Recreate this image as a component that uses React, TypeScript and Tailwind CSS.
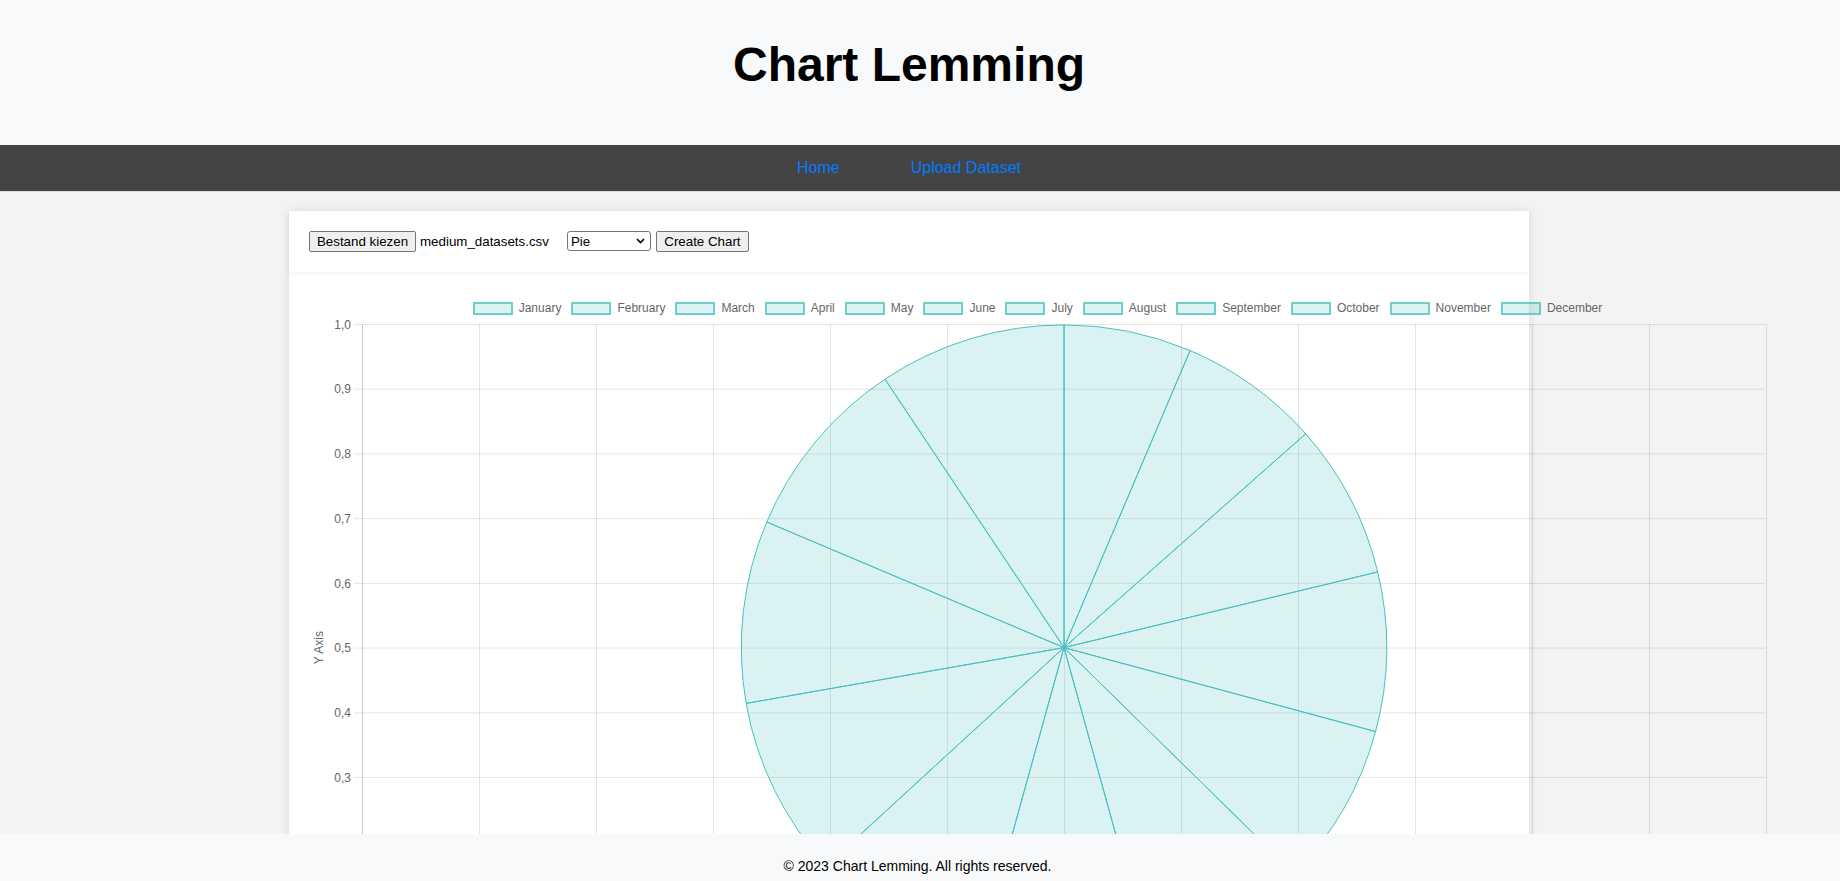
import React from 'react';

const months = [
    'January', 'February', 'March', 'April', 'May', 'June',
    'July', 'August', 'September', 'October', 'November', 'December',
];

// slice boundaries in degrees, clockwise from the east, starting at the top
const bounds = [-90, -67.0, -41.5, -13.56, 15.08, 44.45, 74.5, 105.5, 137.45, 170.04, 202.9, 236.3, 270];

const CHART_LEFT = 53;
const CHART_RIGHT = 1456.5;
const ROW = 64.72;
const CX = 755;
const CY = 323.6;
const R = 322.7;

const point = (deg: number) => {
    const a = (deg * Math.PI) / 180;
    return `${(CX + R * Math.cos(a)).toFixed(2)} ${(CY + R * Math.sin(a)).toFixed(2)}`;
};

const PieChart: React.FC = () => {
    const step = (CHART_RIGHT - CHART_LEFT) / 12;
    const rows = Array.from({ length: 11 }, (_, i) => i);
    // only the labels above the footer are visible
    const labels = Array.from({ length: 8 }, (_, i) => i);

    return (
        <div className="w-[1457px]">
            {/* Legend */}
            <div className="h-[32px] flex items-center justify-center">
                {months.map((m, i) => (
                    <div key={m} className={`flex items-center ${i > 0 ? 'ml-[10px]' : ''}`}>
                        <span className="w-[40px] h-[13px] border-2 border-[rgba(75,192,192,0.75)] bg-[rgba(75,192,192,0.2)]" />
                        <span className="ml-[6px] text-[12px] leading-[14px] text-[#666]">{m}</span>
                    </div>
                ))}
            </div>

            <svg width="1457" height="680" className="block overflow-visible" style={{ fontFamily: '"Liberation Sans", Arial, sans-serif' }}>
                {/* horizontal grid */}
                {rows.map((i) => (
                    <line key={`h${i}`} x1={45} x2={CHART_RIGHT} y1={i * ROW + 0.5} y2={i * ROW + 0.5} stroke="rgba(0,0,0,0.1)" />
                ))}

                {/* y tick labels */}
                {labels.map((i) => (
                    <text key={`t${i}`} x={42} y={i * ROW + 0.5} dy="0.35em" textAnchor="end" fontSize="12" fill="#666">
                        {(1 - i / 10).toFixed(1).replace('.', ',')}
                    </text>
                ))}

                {/* vertical grid */}
                {Array.from({ length: 13 }, (_, k) => (
                    <line
                        key={`v${k}`}
                        x1={Math.round(CHART_LEFT + k * step) + 0.5}
                        x2={Math.round(CHART_LEFT + k * step) + 0.5}
                        y1={0}
                        y2={10 * ROW + 8}
                        stroke={k === 0 ? 'rgba(0,0,0,0.2)' : 'rgba(0,0,0,0.1)'}
                    />
                ))}

                <text x={10} y={CY} transform={`rotate(-90 10 ${CY})`} textAnchor="middle" dy="0.35em" fontSize="12" fill="#666">
                    Y Axis
                </text>

                {/* pie slices */}
                {bounds.slice(0, -1).map((start, i) => (
                    <path
                        key={`s${i}`}
                        d={`M ${CX} ${CY} L ${point(start)} A ${R} ${R} 0 0 1 ${point(bounds[i + 1])} Z`}
                        fill="rgba(75,192,192,0.2)"
                        stroke="rgb(75,192,192)"
                        strokeWidth="1"
                        strokeLinejoin="round"
                    />
                ))}
            </svg>
        </div>
    );
};

const App: React.FC = () => {
    return (
        <div className="h-screen overflow-hidden flex flex-col bg-[#f3f3f3] font-['Liberation_Sans',Arial,sans-serif] text-black">
            {/* Header */}
            <header className="h-[145px] shrink-0 bg-[#f8f9fa]">
                <div className="w-[1818px] flex justify-center pt-[37px]">
                    <h1 className="text-[48px] leading-[1.15] font-bold">Chart Lemming</h1>
                </div>
            </header>

            {/* Navigation */}
            <nav className="h-[47px] shrink-0 bg-[#444] border-b border-[#dcdcdc]">
                <div className="w-[1818px] h-full flex items-center justify-center gap-[71px] text-[16px]">
                    <a href="#" className="text-[#007bff]">Home</a>
                    <a href="#" className="text-[#007bff]">Upload Dataset</a>
                </div>
            </nav>

            {/* Main content */}
            <main className="flex-1 min-h-0 w-[1818px] flex justify-center pt-[19px]">
                <div className="w-[1240px] h-full bg-white shadow-[0_0_10px_rgba(0,0,0,0.1)]">
                    {/* Upload form */}
                    <div className="relative z-10 h-[61px] px-[20px] flex items-center text-[13.33px] bg-white shadow-[0_2px_4px_rgba(0,0,0,0.05)]">
                        <button className="w-[107px] h-[21px] border border-[#767676] rounded-[2px] bg-[#efefef]">
                            Bestand kiezen
                        </button>
                        <span className="ml-[4px] mr-[18px]">medium_datasets.csv</span>
                        <div className="relative">
                            <select className="appearance-none w-[84px] h-[20px] pl-[3px] border border-[#767676] rounded-[3px] bg-white">
                                <option>Pie</option>
                                <option>Bar</option>
                                <option>Line</option>
                            </select>
                            <svg className="absolute right-[6px] top-[7px] pointer-events-none" width="9" height="6" viewBox="0 0 9 6">
                                <path d="M1 1 L4.5 4.5 L8 1" fill="none" stroke="#000" strokeWidth="1.6" />
                            </svg>
                        </div>
                        <button className="ml-[5px] w-[93px] h-[21px] border border-[#767676] rounded-[2px] bg-[#efefef]">
                            Create Chart
                        </button>
                    </div>

                    {/* Chart */}
                    <div className="p-[20px]">
                        <PieChart />
                    </div>
                </div>
            </main>

            {/* Footer */}
            <footer className="fixed bottom-0 left-0 right-0 h-[47px] bg-[#f8f9fa] flex justify-center pt-[24px] pr-[5px] text-[14px] leading-[16px]">
                © 2023 Chart Lemming. All rights reserved.
            </footer>
        </div>
    );
};

export default App;
